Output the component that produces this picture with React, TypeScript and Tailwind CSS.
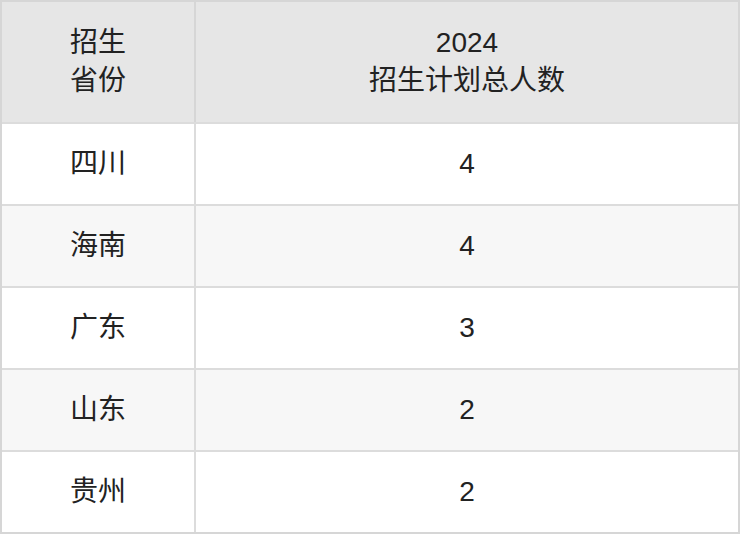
import React from 'react';

const rows = [
  { province: '四川', total: '4' },
  { province: '海南', total: '4' },
  { province: '广东', total: '3' },
  { province: '山东', total: '2' },
  { province: '贵州', total: '2' },
];

const App: React.FC = () => {
  return (
    <div className="w-[740px] h-[534px] bg-white font-['Liberation_Sans','Noto_Sans_CJK_SC',sans-serif] text-[28px] leading-[1.4] text-[#222222]">
      <div className="border-2 border-[#d6d6d6]">
        {/* Header */}
        <div className="flex h-[120px] bg-[#e6e6e6]">
          <div className="w-[192px] flex items-center justify-center text-center">
            <div className="leading-[38px]">
              招生
              <br />
              省份
            </div>
          </div>
          <div className="flex-1 border-l-2 border-[#d6d6d6] flex items-center justify-center text-center">
            <div className="leading-[38px]">
              2024
              <br />
              招生计划总人数
            </div>
          </div>
        </div>

        {/* Body */}
        {rows.map((row, i) => (
          <div
            key={row.province}
            className={`flex h-[82px] border-t-2 border-[#dcdcdc] ${i % 2 === 1 ? 'bg-[#f7f7f7]' : 'bg-white'}`}
          >
            <div className="w-[192px] flex items-center justify-center">{row.province}</div>
            <div className="flex-1 border-l-2 border-[#dcdcdc] flex items-center justify-center">{row.total}</div>
          </div>
        ))}
      </div>
    </div>
  );
};

export default App;
